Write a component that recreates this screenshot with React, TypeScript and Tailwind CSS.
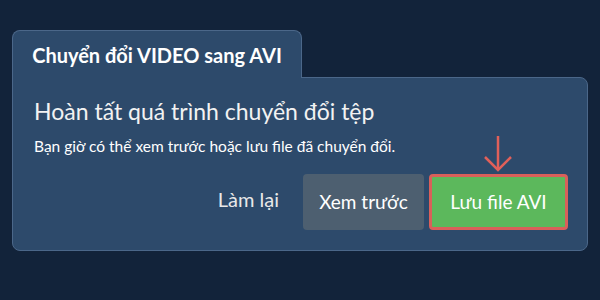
import React from "react";

export default function App() {
  return (
    <div
      className="w-[600px] h-[300px] bg-[#12233a] pt-[30px] px-[12px]"
      style={{ fontFamily: "Lato, 'Noto Sans', sans-serif" }}
    >
      {/* Tab header */}
      <div className="relative z-10 flex">
        <div className="h-[48px] w-[290px] flex items-center justify-center bg-[#2d4a6b] border border-b-0 border-[#4b6789] rounded-t-[8px] text-white font-bold text-[20px]">
          Chuyển đổi VIDEO sang AVI
        </div>
      </div>

      {/* Panel */}
      <div className="relative -mt-px h-[174px] bg-[#2d4a6b] border border-[#4b6789] rounded-b-[8px] rounded-tr-[8px] pl-[21px] pr-[19px] pt-[18px]">
        <h1 className="text-[#f2f2f2] text-[23px] leading-[30px]">
          Hoàn tất quá trình chuyển đổi tệp
        </h1>
        <p className="mt-[10px] text-white text-[15.5px] leading-[20px]">
          Bạn giờ có thể xem trước hoặc lưu file đã chuyển đổi.
        </p>

        <div className="mt-[18px] flex items-center justify-end">
          <span className="text-[#e8e8e8] text-[20px] mr-[24px] -mt-[6px]">Làm lại</span>
          <div className="h-[56px] w-[121px] flex items-center justify-center rounded-[4px] bg-[#4d5f70] text-white text-[19px]">
            Xem trước
          </div>
          <div className="ml-[5px] h-[56px] w-[139px] flex items-center justify-center rounded-[4px] border-[3px] border-[#d9605a] bg-[#5cb85c] text-white text-[19px]">
            Lưu file AVI
          </div>
        </div>

        {/* Pointer arrow */}
        <svg
          className="absolute left-[470px] top-[58px]"
          width="30"
          height="36"
          viewBox="0 0 30 36"
          fill="none"
          stroke="#e0605a"
          strokeWidth="2.5"
        >
          <line x1="15" y1="0" x2="15" y2="34" />
          <polyline points="2,21 15,34 28,21" />
        </svg>
      </div>
    </div>
  );
}
